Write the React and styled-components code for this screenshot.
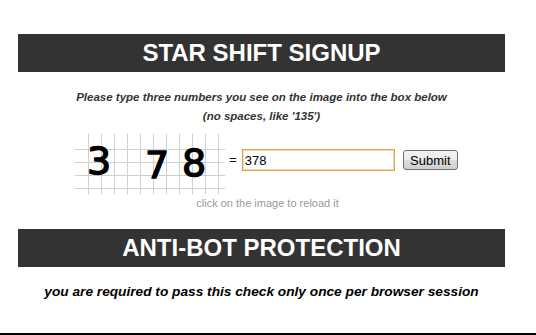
import React from "react";
import styled, { createGlobalStyle } from "styled-components";

const Global = createGlobalStyle`
  html, body { margin: 0; padding: 0; background: #fff; }
  body { font-family: "Liberation Sans", Arial, sans-serif; overflow: hidden; }
`;

const Page = styled.div`
  height: 335px;
  display: flex;
  flex-direction: column;
`;

const Container = styled.div`
  width: 487px;
  margin-left: 18px;
  padding-top: 34px;
  flex: 1;
`;

const Bar = styled.h1`
  margin: ${(p) => p.$mt || 0}px 0 0 0;
  height: 38px;
  background: #333333;
  color: #fff;
  font-family: "Liberation Sans", Arial, sans-serif;
  font-weight: bold;
  font-size: 24px;
  line-height: 38px;
  text-align: center;
`;

const Instructions = styled.p`
  margin: 16px 0 0 0;
  font-size: 11.5px;
  line-height: 19px;
  font-weight: bold;
  font-style: italic;
  color: #333;
  text-align: center;
`;

const CaptchaRow = styled.div`
  margin-top: 8px;
  display: flex;
  justify-content: center;
  align-items: flex-start;
  padding-left: 10px;
`;

const CaptchaImg = styled.svg`
  display: block;
  width: 150px;
  height: 60px;
  cursor: pointer;
`;

const Equals = styled.span`
  margin: 18px 5px 0 4px;
  font-size: 13px;
  line-height: 15px;
  color: #000;
`;

const Input = styled.input`
  margin-top: 15px;
  box-sizing: border-box;
  width: 153px;
  height: 22px;
  padding: 0 2px;
  border: 1px solid #d9a54c;
  box-shadow: inset 0 0 0 1px #f4dcae;
  outline: none;
  font-family: "Liberation Sans", Arial, sans-serif;
  font-size: 13px;
  color: #000;
`;

const Button = styled.button`
  margin: 16px 0 0 8px;
  box-sizing: border-box;
  width: 55px;
  height: 20px;
  padding: 0;
  border: 1px solid #707070;
  border-radius: 3px;
  background: linear-gradient(#f2f2f2, #ebebeb 50%, #dddddd 50%, #cfcfcf);
  font-family: "Liberation Sans", Arial, sans-serif;
  font-size: 13px;
  color: #000;
`;

const Reload = styled.div`
  margin-top: 3px;
  padding-left: 12px;
  font-size: 11px;
  line-height: 12px;
  color: #999;
  text-align: center;
`;

const Note = styled.p`
  margin: 17px 0 0 0;
  font-size: 13.7px;
  line-height: 16px;
  font-weight: bold;
  font-style: italic;
  color: #000;
  text-align: center;
`;

const Footer = styled.div`
  height: 0;
  border-top: 2px solid #000;
`;

const verticals = Array.from({ length: 11 }, (_, i) => 13.5 + 13 * i);
const horizontals = [15.5, 28.5, 41.5, 54.5];

function Captcha() {
  return (
    <CaptchaImg viewBox="0 0 150 60">
      <rect width="150" height="60" fill="#fff" />
      {verticals.map((x) => (
        <line key={"v" + x} x1={x} y1="0" x2={x} y2="60" stroke="#cfcfcf" strokeWidth="1" />
      ))}
      {horizontals.map((y) => (
        <line key={"h" + y} x1="0" y1={y} x2="150" y2={y} stroke="#cfcfcf" strokeWidth="1" />
      ))}
      <g
        fontFamily="'DejaVu Sans', sans-serif"
        fontSize="38"
        fill="#000"
        stroke="#000"
        strokeWidth="1.4"
        strokeLinejoin="round"
      >
        <text x="12" y="40">3</text>
        <text x="70" y="44">7</text>
        <text x="107" y="42">8</text>
      </g>
    </CaptchaImg>
  );
}

export default function App() {
  return (
    <Page>
      <Global />
      <Container>
        <Bar>STAR SHIFT SIGNUP</Bar>
        <Instructions>
          Please type three numbers you see on the image into the box below
          <br />
          (no spaces, like '135')
        </Instructions>
        <CaptchaRow>
          <Captcha />
          <Equals>=</Equals>
          <Input defaultValue="378" />
          <Button>Submit</Button>
        </CaptchaRow>
        <Reload>click on the image to reload it</Reload>
        <Bar $mt={20}>ANTI-BOT PROTECTION</Bar>
        <Note>you are required to pass this check only once per browser session</Note>
      </Container>
      <Footer />
    </Page>
  );
}
